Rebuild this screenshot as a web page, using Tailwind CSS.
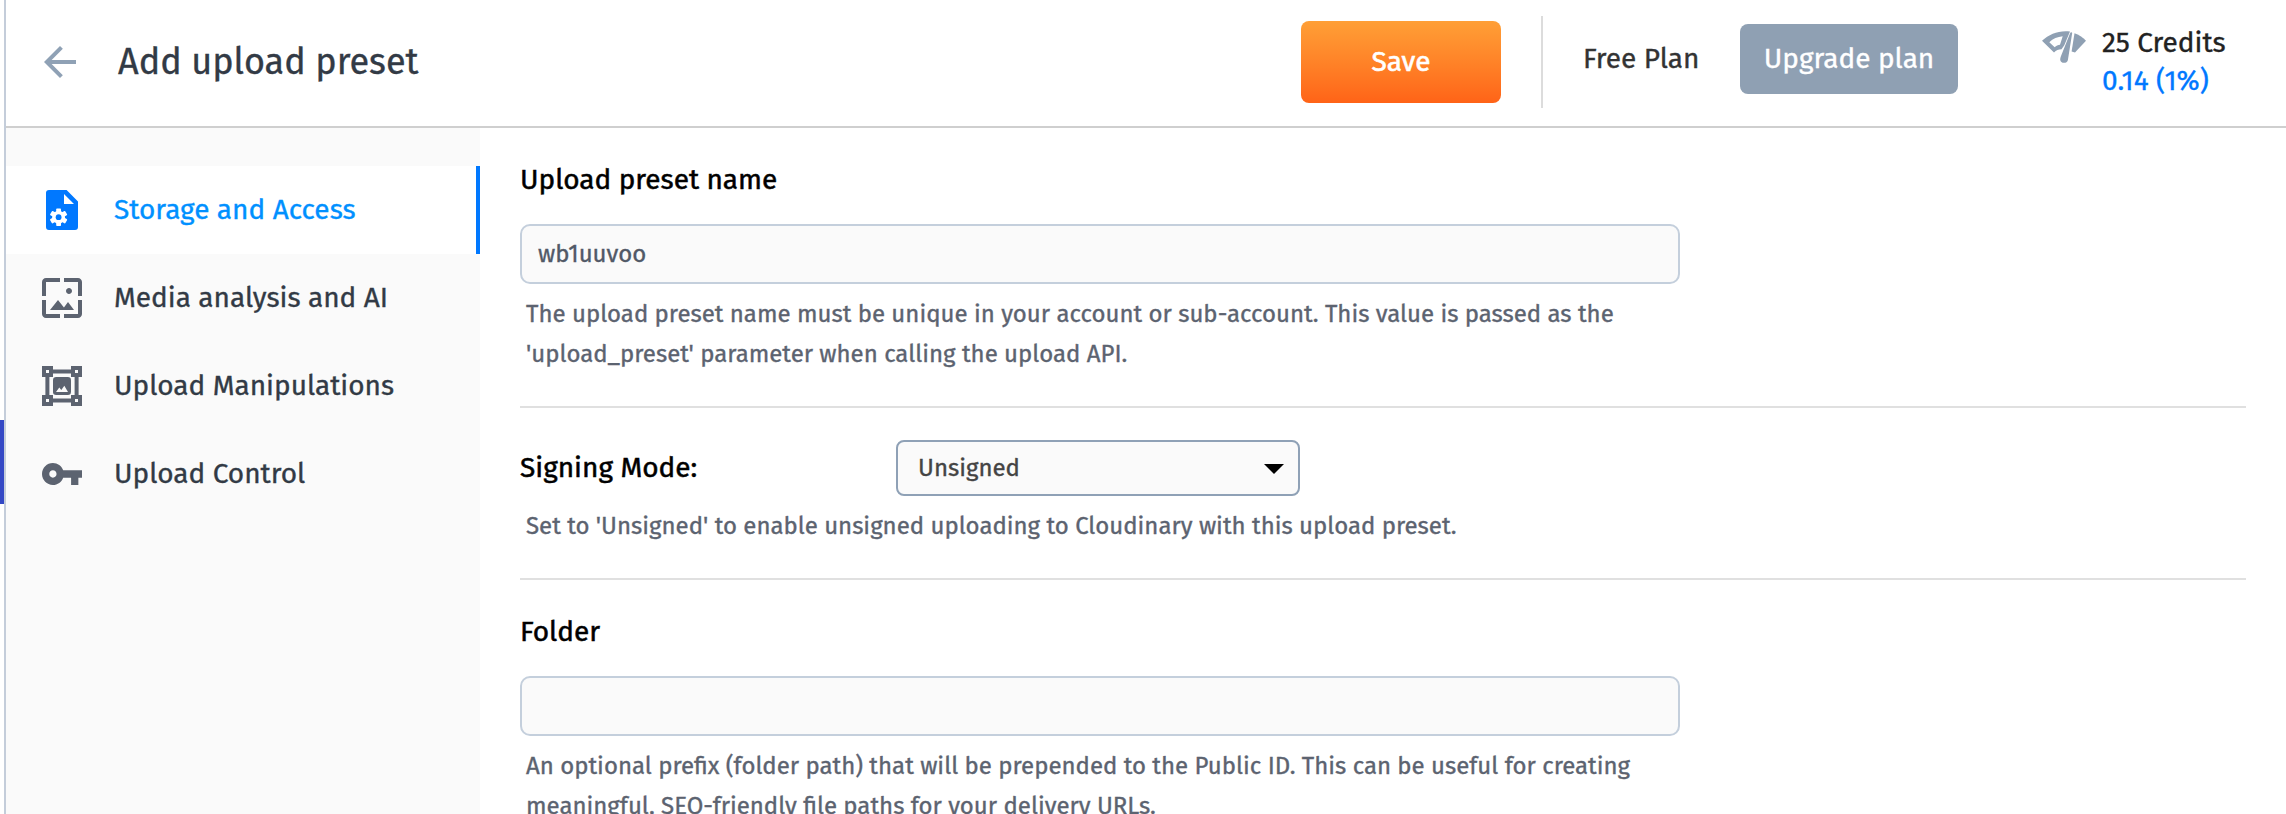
<!DOCTYPE html>
<html lang="en">
<head>
<meta charset="utf-8">
<title>Add upload preset</title>
<script src="https://cdn.jsdelivr.net/npm/@tailwindcss/browser@4"></script>
</head>
<body class="flex h-[814px] w-[2286px] overflow-hidden bg-white font-['Fira_Sans','Noto_Sans',sans-serif] [-webkit-text-stroke:0.35px]">
  <div class="w-1 shrink-0 pt-[420px]"><div class="h-[84px] bg-[#3448c5]"></div></div>
  <div class="flex min-w-0 flex-1 flex-col border-l-2 border-[#c4cdda]">
    <header class="flex h-32 shrink-0 items-center border-b-2 border-[#cfcfcf] pb-0.5 pl-[38px]">
      <svg class="size-8 shrink-0" viewBox="4 4 16 16" fill="#8fa1b5"><path d="M20 11H7.83l5.59-5.59L12 4l-8 8 8 8 1.41-1.41L7.83 13H20v-2z"/></svg>
      <h1 class="ml-[42px] w-[1183px] whitespace-nowrap text-[36px] leading-10 text-[#323a45]">Add upload preset</h1>
      <button class="h-[82px] w-[200px] shrink-0 rounded-lg bg-linear-to-b from-[#ff9f36] to-[#ff6317] text-[28px] text-white [-webkit-text-stroke:0.6px]">Save</button>
      <div class="ml-10 h-[92px] w-0.5 shrink-0 bg-[#dcdcdc]"></div>
      <div class="ml-[40px] mb-1.5 w-[157px] shrink-0 text-[28px] leading-10 text-[#333]">Free Plan</div>
      <button class="mb-1.5 h-[70px] w-[218px] shrink-0 rounded-lg bg-[#8fa0b3] text-[28px] text-white">Upgrade plan</button>
      <svg class="ml-[84px] mb-[30px] h-8 w-11 shrink-0" viewBox="0 0 44 32" fill="#8fa0b3">
        <path fill-rule="evenodd" d="M0 9.8C7.500 2.800 17 -.8 28 .5L22.300 14.200 19.500 18.300C16.500 18.300 14.200 19.300 12 21.600ZM7.300 11.200 12.700 16.200C14.200 14.900 16 14.200 18 13.800L20.700 5.300C15.500 5.800 11 7.700 7.300 11.200Z"/>
        <path d="M28.300 1.700C28.700 .8 30.300 1 30.200 2L25.900 29C25.200 33 18.100 32.800 18.200 28.300C18.200 27.300 18.600 26.200 19 25.100Z"/>
        <path d="M32.500 2.300C36.800 3.700 40.600 6.200 44 9.800L33 21.600 29.600 20.400Z"/>
      </svg>
      <div class="ml-4 whitespace-nowrap text-[28px] leading-[38px]">
        <div class="text-[#222]">25 Credits</div>
        <div class="text-[#0078ff]">0.14 (1%)</div>
      </div>
    </header>
    <div class="flex min-h-0 flex-1">
      <nav class="w-[474px] shrink-0 bg-[#fafafa] pt-[38px] text-[28px] text-[#323a45]">
        <a class="flex h-[88px] items-center border-r-4 border-[#0078ff] bg-white pl-9 text-[#0090ff]">
          <svg class="size-10" viewBox="0 0 40 40">
            <path fill="#0078ff" fill-rule="evenodd" d="M7 0H24.600L36 11.400V37A3 3 0 0 1 33 40H7A3 3 0 0 1 4 37V3A3 3 0 0 1 7 0ZM22 4V14H32Z"/>
            <g transform="translate(16.600 27.200)">
              <g fill="#fff">
                <rect x="-2.400" y="-8.800" width="4.800" height="17.600" rx=".8"/>
                <rect x="-2.400" y="-8.800" width="4.800" height="17.600" rx=".8" transform="rotate(60)"/>
                <rect x="-2.400" y="-8.800" width="4.800" height="17.600" rx=".8" transform="rotate(-60)"/>
                <circle r="6.400"/>
              </g>
              <circle r="2.900" fill="#0078ff"/>
            </g>
          </svg>
          <span class="ml-8">Storage and Access</span>
        </a>
        <a class="flex h-[88px] items-center pl-9">
          <svg class="size-10" viewBox="2 2 20 20" fill="#5c6370"><path d="M4 4h7V2H4c-1.1 0-2 .9-2 2v7h2V4zm6 9l-4 5h12l-3-4-2.030 2.710L10 13zm7-4.500c0-.83-.67-1.500-1.500-1.500S14 7.670 14 8.500s.67 1.500 1.500 1.500S17 9.330 17 8.500zM20 2h-7v2h7v7h2V4c0-1.100-.9-2-2-2zm0 18h-7v2h7c1.100 0 2-.9 2-2v-7h-2v7zM4 13H2v7c0 1.100.9 2 2 2h7v-2H4v-7z"/></svg>
          <span class="ml-8">Media analysis and AI</span>
        </a>
        <a class="flex h-[88px] items-center pl-9">
          <svg class="size-10" viewBox="0 0 40 40" fill="#5c6370">
            <path fill-rule="evenodd" d="M3.400 3.400H36.600V36.600H3.400ZM7.400 7.400V32.600H32.600V7.400Z"/>
            <path d="M0 0H11V11H0ZM29 0H40V11H29ZM0 29H11V40H0ZM29 29H40V40H29Z"/>
            <path fill="#fafafa" d="M4 4H7V7H4ZM33 4H36V7H33ZM4 33H7V36H4ZM33 33H36V36H33Z"/>
            <rect x="11" y="11" width="18" height="18" rx="3.200"/>
            <path fill="#fafafa" d="M14 26 17.300 21.600 19.300 24 22.300 19.800 26 26Z"/>
          </svg>
          <span class="ml-8">Upload Manipulations</span>
        </a>
        <a class="flex h-[88px] items-center pl-9">
          <svg class="h-[22px] w-10" viewBox="1 6 22 12" fill="#5c6370"><path d="M12.650 10C11.830 7.670 9.610 6 7 6c-3.310 0-6 2.690-6 6s2.690 6 6 6c2.610 0 4.830-1.670 5.650-4H17v4h4v-4h2v-4H12.650zM7 14c-1.100 0-2-.9-2-2s.9-2 2-2 2 .9 2 2-.9 2-2 2z"/></svg>
          <span class="ml-8">Upload Control</span>
        </a>
      </nav>
      <main class="min-w-0 flex-1 pl-10 pr-10 text-2xl leading-10 text-[#5c6370]">
        <section class="border-b-2 border-[#e0e0e0] py-8">
          <h2 class="text-[28px] leading-10 text-black [-webkit-text-stroke:0.5px]">Upload preset name</h2>
          <div class="mt-6 flex h-[60px] w-[1160px] items-center rounded-[10px] border-2 border-[#c4cfdc] bg-[#fafafa] pl-4 text-[#515967]">wb1uuvoo</div>
          <p class="mt-2.5 pl-1.5">The upload preset name must be unique in your account or sub-account. This value is passed as the<br>'upload_preset' parameter when calling the upload API.</p>
        </section>
        <section class="border-b-2 border-[#e0e0e0] py-8">
          <div class="flex h-14 items-center">
            <h2 class="w-[376px] text-[28px] text-black [-webkit-text-stroke:0.5px]">Signing Mode:</h2>
            <div class="flex h-14 w-[404px] items-center justify-between rounded-lg border-2 border-[#8fa1b6] bg-[#fafafa] pl-5 pr-3.5 text-[#444]">
              <span>Unsigned</span>
              <svg class="mt-0.5 h-2.5 w-5" viewBox="0 0 20 10"><path d="M0 0H20L10 10Z"/></svg>
            </div>
          </div>
          <p class="mt-2.5 pl-1.5">Set to 'Unsigned' to enable unsigned uploading to Cloudinary with this upload preset.</p>
        </section>
        <section class="pt-8">
          <h2 class="text-[28px] leading-10 text-black [-webkit-text-stroke:0.5px]">Folder</h2>
          <div class="mt-6 h-[60px] w-[1160px] rounded-[10px] border-2 border-[#c4cfdc] bg-[#fafafa]"></div>
          <p class="mt-2.5 pl-1.5">An optional prefix (folder path) that will be prepended to the Public ID. This can be useful for creating<br>meaningful, SEO-friendly file paths for your delivery URLs.</p>
        </section>
      </main>
    </div>
  </div>
</body>
</html>
